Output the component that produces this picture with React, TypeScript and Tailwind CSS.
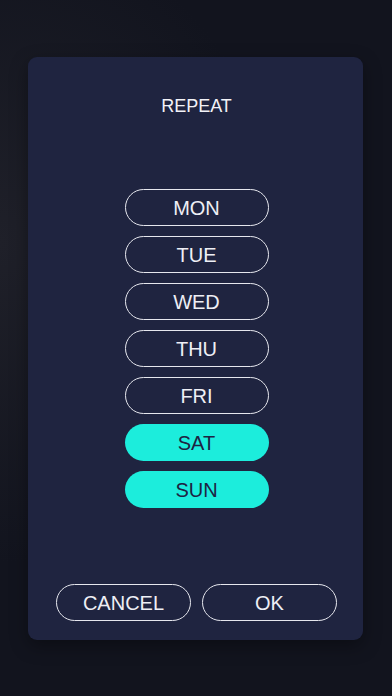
const days = [
  { label: "MON", on: false },
  { label: "TUE", on: false },
  { label: "WED", on: false },
  { label: "THU", on: false },
  { label: "FRI", on: false },
  { label: "SAT", on: true },
  { label: "SUN", on: true },
];

export default function App() {
  return (
    <div className="h-[696px] w-[392px] bg-[#12141e] bg-[radial-gradient(ellipse_at_0%_35%,#1f2029_0%,#12141e_50%)] pt-[57px] font-['Liberation_Sans',Arial,sans-serif]">
      <div className="mx-[28px] flex h-[583px] w-[335px] flex-col rounded-[9px] bg-[#1f2440] pl-[28px] pr-[26px] pt-[36px] pb-[19px] shadow-[0_6px_18px_rgba(0,0,0,0.35)]">
        <h1 className="text-center text-[18px] leading-[26px] text-[#f2f2f7]">REPEAT</h1>

        {/* day toggles */}
        <div className="mt-[70px] flex flex-col items-center gap-[10px]">
          {days.map((d) => (
            <button
              key={d.label}
              className={
                d.on
                  ? "flex h-[37px] w-[144px] items-center justify-center rounded-full bg-[#1ceddc] text-[20px] text-[#1e2342]"
                  : "flex h-[37px] w-[144px] items-center justify-center rounded-full border-[1.5px] border-[#e6e7ee] text-[20px] text-[#eeeff5]"
              }
            >
              {d.label}
            </button>
          ))}
        </div>

        <div className="mt-auto flex gap-[11px]">
          <button className="flex h-[37px] flex-1 items-center justify-center rounded-full border-[1.5px] border-[#e6e7ee] text-[20px] text-[#eeeff5]">
            CANCEL
          </button>
          <button className="flex h-[37px] flex-1 items-center justify-center rounded-full border-[1.5px] border-[#e6e7ee] text-[20px] text-[#eeeff5]">
            OK
          </button>
        </div>
      </div>
    </div>
  );
}
